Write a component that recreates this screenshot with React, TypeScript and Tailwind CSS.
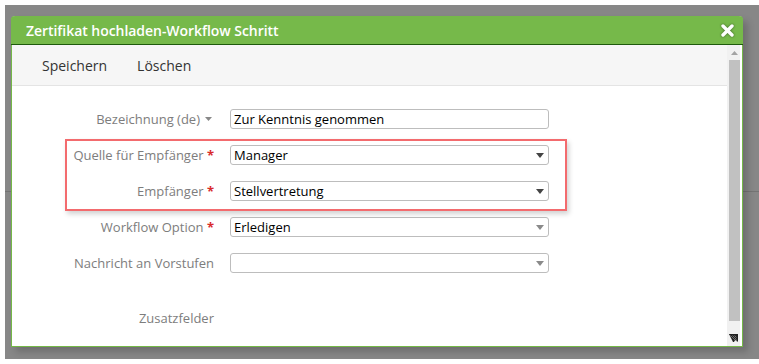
import React from "react";

const Caret = ({ dark }: { dark: boolean }) => (
  <svg width="8" height="5" viewBox="0 0 8 5" className="shrink-0">
    <polygon points="0,0 8,0 4,5" fill={dark ? "#444" : "#8a8a8a"} />
  </svg>
);

const Star = () => <span className="text-[#d92b2b] font-bold"> *</span>;

const Row = ({
  label,
  children,
  className = "",
}: {
  label: React.ReactNode;
  children?: React.ReactNode;
  className?: string;
}) => (
  <div className={`flex items-center h-[20px] ${className}`}>
    <div className="w-[202px] text-right text-[13px] text-[#7d7d7d] whitespace-nowrap leading-[20px]">
      {label}
    </div>
    <div className="ml-[16px]">{children}</div>
  </div>
);

const TextInput = ({ value }: { value: string }) => (
  <div className="w-[319px] h-[20px] border border-[#bdbdbd] rounded-[3px] bg-white px-[3px] flex items-center text-[13px] text-black leading-none">
    {value}
  </div>
);

const Select = ({ value, dark }: { value: string; dark: boolean }) => (
  <div className="w-[319px] h-[20px] border border-[#bdbdbd] rounded-[3px] bg-white pl-[3px] pr-[4px] flex items-center justify-between text-[13px] text-black leading-none">
    <span>{value}</span>
    <Caret dark={dark} />
  </div>
);

export default function App() {
  return (
    <div
      className="w-[759px] h-[364px] bg-white pt-[5px] pl-[5px] pb-[5px] overflow-hidden"
      style={{ fontFamily: '"Open Sans", "Noto Sans", sans-serif' }}
    >
      <div className="relative h-full bg-[#878787] pl-[6px] pt-[11px]">
        <div className="absolute left-0 right-0 top-[186px] h-px bg-[#747474]" />
        <div className="relative w-[732px] h-[331px] rounded-t-[4px] border border-t-0 border-[#74b847] bg-white shadow-[5px_5px_7px_rgba(0,0,0,0.18)] flex flex-col">
          {/* header */}
          <div className="h-[29px] -mx-px bg-[#76b94a] rounded-t-[4px] border-b border-[#1e5a0c] flex items-center justify-between pl-[15px] pr-[9px] shrink-0">
            <span className="text-white text-[14px] font-semibold tracking-[-0.05px]">
              Zertifikat hochladen-Workflow Schritt
            </span>
            <svg width="13" height="13" viewBox="0 0 13 13" className="drop-shadow-[0_0_1px_rgba(0,0,0,0.5)]">
              <path d="M2 2 L11 11 M11 2 L2 11" stroke="#fff" strokeWidth="3.4" strokeLinecap="round" />
            </svg>
          </div>
          {/* body */}
          <div className="flex flex-1 min-h-0">
            <div className="flex-1 flex flex-col">
              <div className="h-[41px] bg-[#f6f6f6] border-b border-[#e4e4e4] flex items-center pl-[30px] gap-[30px] text-[14px] text-[#333] shrink-0">
                <span>Speichern</span>
                <span>Löschen</span>
              </div>
              <div className="relative flex-1 pt-[23px] flex flex-col gap-[16px]">
                <div className="absolute left-[53px] top-[53px] w-[502px] h-[72px] border-2 border-[#f36b6e] shadow-[2px_3px_5px_rgba(0,0,0,0.18)] pointer-events-none" />
                <Row
                  label={
                    <span className="inline-flex items-center gap-[5px]">
                      Bezeichnung (de)
                      <svg width="7" height="4" viewBox="0 0 7 4" className="mr-[2px]">
                        <polygon points="0,0 7,0 3.5,4" fill="#888" />
                      </svg>
                    </span>
                  }
                >
                  <TextInput value="Zur Kenntnis genommen" />
                </Row>
                <Row label={<>Quelle für Empfänger<Star /></>}>
                  <Select value="Manager" dark />
                </Row>
                <Row label={<>Empfänger<Star /></>}>
                  <Select value="Stellvertretung" dark />
                </Row>
                <Row label={<>Workflow Option<Star /></>}>
                  <Select value="Erledigen" dark={false} />
                </Row>
                <Row label="Nachricht an Vorstufen">
                  <Select value="" dark={false} />
                </Row>
                <Row label="Zusatzfelder" className="mt-[19px]" />
              </div>
            </div>
            {/* scrollbar */}
            <div className="w-[15px] pr-[2px] shrink-0 flex">
              <div className="w-[13px] bg-[#f1f1f1] flex flex-col items-end">
                <div className="w-[11px] h-[15px] flex items-center justify-center">
                  <svg width="7" height="4" viewBox="0 0 7 4">
                    <polygon points="3.5,0 7,4 0,4" fill="#a3a3a3" />
                  </svg>
                </div>
                <div className="w-[11px] h-[261px] bg-[#c1c1c1]" />
                <div className="flex-1 w-[13px] flex items-end justify-center pb-[4px]">
                  <svg width="9" height="8" viewBox="0 0 9 8">
                    <polygon points="0,0 9,0 9,1 5,8 4,8" fill="#222" />
                    <polygon points="0,0 9,0 9,8" fill="#222" />
                    <path d="M1.5 1.5 L7.5 7.5 M3.5 1.5 L7.5 5.5 M5.5 1.5 L7.5 3.5" stroke="#9a9a9a" strokeWidth="0.7" />
                  </svg>
                </div>
              </div>
            </div>
          </div>
        </div>
      </div>
    </div>
  );
}
